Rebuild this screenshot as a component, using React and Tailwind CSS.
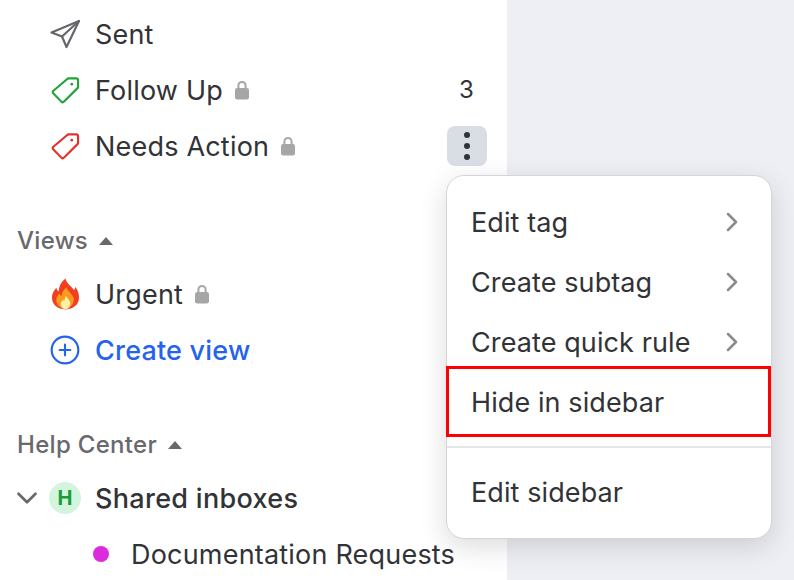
import React from 'react';
import { ChevronDown, ChevronRight, CirclePlus } from 'lucide-react';

function SentIcon() {
  return (
    <svg width="32" height="32" viewBox="0 0 32 32" fill="none" stroke="#66676b" strokeWidth="2.2" strokeLinejoin="round" strokeLinecap="round" className="-ml-[1px]">
      <path d="M30 3 L2.5 14.5 L13 18.5 L17.5 29 Z" />
      <path d="M30 3 L13 18.5" />
    </svg>
  );
}

function TagIcon({ color }) {
  return (
    <svg width="29" height="29" viewBox="0 0 30 30" fill="none" stroke={color} strokeWidth="2.2" strokeLinejoin="round" className="ml-[1px]">
      <path d="M18.5 2.5 H26 a2 2 0 0 1 2 2 V11 a2.500 2.500 0 0 1 -.8 1.800 L13.500 26.500 a2 2 0 0 1 -2.800 0 L2.500 18 a2 2 0 0 1 0 -2.800 L16.500 3.300 a2.500 2.500 0 0 1 2 -.8 Z" />
      <circle cx="21.5" cy="8.5" r="1.4" fill={color} stroke="none" />
    </svg>
  );
}

function LockIcon() {
  return (
    <svg width="14" height="20" viewBox="0 0 14 20" className="shrink-0">
      <path d="M3.4 9 V5.500 a3.600 3.600 0 0 1 7.200 0 V9" fill="none" stroke="#a6a6a6" strokeWidth="2" />
      <rect x="0" y="8" width="14" height="11.5" rx="2.2" fill="#a6a6a6" />
    </svg>
  );
}

function FireIcon() {
  return (
    <svg width="27" height="32" viewBox="0 0 28 32" className="ml-[2px]">
      <path d="M14 0 C15 5 20 8 23 12 C24 10.500 24 9.500 24 8.500 C27 12 28 16 28 20 C28 27 22 32 14 32 C6 32 0 27 0 20 C0 15 2.500 12 4.500 9.500 C5 11.500 5.500 12.500 7 13.500 C7 8 10 3 14 0 Z" fill="#f0401f" />
      <path d="M15 9 C16 13 21 16 22.500 20 C23.500 26 19 31 14 31 C8.500 31 4 27 4.500 21.500 C5 18.500 6.500 17 7.500 15.500 C8.500 17 9 17.500 10 18 C10 15 12 11.500 15 9 Z" fill="#fb9a1c" />
      <path d="M14.500 18 C15.500 20.500 19 22 19 26 C19 29 17 31.500 14 31.500 C11 31.500 9 29 9 26.500 C9 24 11 23.500 11.500 22 C12 22.500 12.500 23 13 23 C13 21 13.500 19.500 14.500 18 Z" fill="#fff0a8" />
    </svg>
  );
}

function Row({ icon, label, lock, right, className = 'text-[#323336]' }) {
  return (
    <div className="flex h-14 items-center pl-[50px] pr-[20px]">
      <div className="flex w-[45px] shrink-0 items-center">{icon}</div>
      <span className={className}>{label}</span>
      {lock && <span className="ml-[12px] flex"><LockIcon /></span>}
      {right && <div className="ml-auto flex items-center">{right}</div>}
    </div>
  );
}

function SectionHeader({ label }) {
  return (
    <div className="mt-[51px] mb-[9px] flex h-8 items-center gap-[11px] pl-[17px] text-[24px] font-medium tracking-[0.3px] text-[#68696d]">
      <span>{label}</span>
      <span className="h-0 w-0 border-x-[7.5px] border-b-[8px] border-x-transparent border-b-[#68696d]" />
    </div>
  );
}

function MenuItem({ label, arrow, highlighted }) {
  return (
    <div className="relative flex h-[60px] items-center justify-between pl-[24px] pr-[23px]">
      <span>{label}</span>
      {arrow && <ChevronRight size={32} strokeWidth={1.9} className="text-[#8a8b8e]" />}
      {highlighted && <div className="absolute -left-[1px] right-0 -top-[6px] -bottom-[5px] border-[3px] border-[#ff0000]" />}
    </div>
  );
}

export default function App() {
  return (
    <div className="relative h-[580px] w-[794px] overflow-hidden bg-[#eeeff4] text-[27px] leading-none tracking-[0.2px] text-[#323336] font-['Inter',sans-serif]">
      <div className="h-full w-[507px] bg-white pt-[6px]">
        <Row icon={<SentIcon />} label="Sent" />
        <Row icon={<TagIcon color="#1fa33a" />} label="Follow Up" lock right={<span className="pr-[13px] text-[24px]">3</span>} />
        <Row
          icon={<TagIcon color="#e5302e" />}
          label="Needs Action"
          lock
          right={
            <div className="flex h-10 w-10 flex-col items-center justify-center gap-[5px] rounded-lg bg-[#d9dde4]">
              <span className="h-[6px] w-[6px] rounded-full bg-[#323336]" />
              <span className="h-[6px] w-[6px] rounded-full bg-[#323336]" />
              <span className="h-[6px] w-[6px] rounded-full bg-[#323336]" />
            </div>
          }
        />

        <SectionHeader label="Views" />
        <Row icon={<FireIcon />} label="Urgent" lock />
        <Row icon={<CirclePlus size={32} strokeWidth={1.6} className="-ml-[1px] text-[#2563eb]" />} label="Create view" className="font-medium text-[#2563eb]" />

        <SectionHeader label="Help Center" />
        <div className="flex h-14 items-center pl-[10px]">
          <ChevronDown size={34} strokeWidth={1.9} className="text-[#68696d]" />
          <div className="ml-[5px] mr-[14px] flex h-8 w-8 items-center justify-center rounded-full bg-[#d3f4dd] text-[20px] font-bold text-[#1c9b3a]">H</div>
          <span className="font-medium tracking-[0.3px]">Shared inboxes</span>
        </div>
        <div className="flex h-14 items-center pl-[93px]">
          <span className="mr-[22px] h-4 w-4 rounded-full bg-[#dc2bdc]" />
          <span>Documentation Requests</span>
        </div>
      </div>

      <div className="absolute left-[446px] top-[175px] w-[326px] rounded-[18px] border border-[#d4d5d9] bg-white pt-[16px] pb-[16px] tracking-[0.1px] shadow-[0_8px_28px_rgba(0,0,0,0.14)]">
        <MenuItem label="Edit tag" arrow />
        <MenuItem label="Create subtag" arrow />
        <MenuItem label="Create quick rule" arrow />
        <MenuItem label="Hide in sidebar" highlighted />
        <div className="mt-[14px] mb-[14px] h-[2px] bg-[#e2e5ea]" />
        <MenuItem label="Edit sidebar" />
      </div>
    </div>
  );
}
